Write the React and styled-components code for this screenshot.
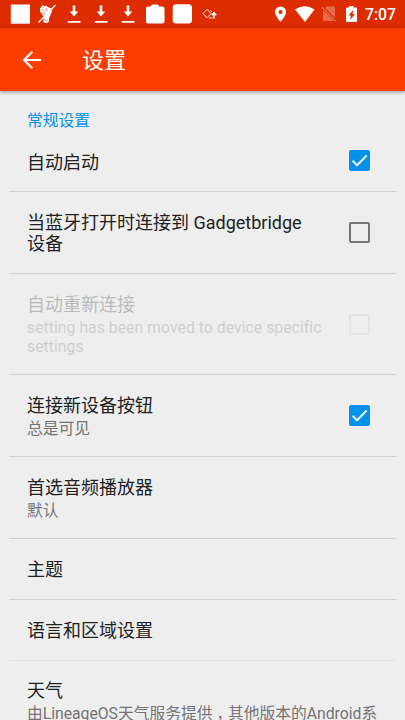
import React from "react";
import styled, { createGlobalStyle } from "styled-components";

const settings = [
  { title: "自动启动", checked: true, height: 62, shift: 4 },
  {
    title: "当蓝牙打开时连接到 Gadgetbridge 设备",
    checked: false,
    height: 82,
    shift: 1,
  },
  {
    title: "自动重新连接",
    summary: "setting has been moved to device specific settings",
    checked: false,
    disabled: true,
    height: 101,
    shift: 2,
  },
  {
    title: "连接新设备按钮",
    summary: "总是可见",
    checked: true,
    height: 82,
    shift: 2.5,
  },
  { title: "首选音频播放器", summary: "默认", height: 82, shift: 2.5 },
  { title: "主题", height: 61 },
  { title: "语言和区域设置", height: 61, faint: true },
  {
    title: "天气",
    summary: "由LineageOS天气服务提供，其他版本的Android系",
    wide: true,
    height: 79,
    shift: 3.5,
  },
];

const DownloadIcon = () => (
  <svg width="14" height="20" viewBox="0 0 14 20" fill="#fff">
    <path d="M5.7 1.5h2.6v6h3L7 12.5 2.7 7.500h3zM0.800 17h12.700v1.700h-12.700z" />
  </svg>
);

const StatusIcons = () => (
  <>
    <Notifications>
      <svg width="20" height="20" viewBox="0 0 20 20">
        <path fill="#fff" d="M0.800 0.500h19.200v19.200H0.800z" />
      </svg>
      <svg width="20" height="20" viewBox="0 0 20 20">
        <path
          fill="#fff"
          d="M4 3l2-2 1.500 1.500 2-1 1 1.500 3 1 1.500 3-1.500 4-1.500 3v3.500l-2 1.500H8l-2-1.500 1-3.500-2-4-2-2.500L3 5z"
        />
        <path stroke="#fff" strokeWidth="1.300" d="M1.500 18.500L18.500 1" />
        <path
          fill="none"
          stroke="#dd2c00"
          strokeWidth="0.500"
          d="M5 5l3 3M9 4l1 3M5 9l3 1M7.500 16h3.500"
        />
      </svg>
      <DownloadIcon />
      <DownloadIcon />
      <DownloadIcon />
      <svg width="20" height="20" viewBox="0 0 20 20">
        <path
          fill="#fff"
          d="M6 2.500V2q0-1.500 1.500-1.500h5Q14 .5 14 2v.5h3q2.500 0 2.500 2v13q0 2-2.500 2H3q-2 0-2-2v-13q0-2 2-2z"
        />
      </svg>
      <svg width="20" height="20" viewBox="0 0 20 20">
        <rect x="0.700" y="0.300" width="19.300" height="19.300" rx="3.500" fill="#fff" />
      </svg>
      <svg width="16" height="20" viewBox="0 0 16 20" fill="none" stroke="#fff">
        <path
          strokeWidth="0.900"
          d="M1.800 9.500L6 5.300l4.200 4.200L6 13.700zM9.500 6.500l1.500 1.500M8 14h3.500"
        />
        <path strokeWidth="1.500" d="M13 14.500V9M10.800 11.200L13 8.800l2.200 2.400" />
      </svg>
    </Notifications>
    <System>
      <svg width="13" height="18" viewBox="0 0 13 18">
        <path
          fill="#fff"
          fillRule="evenodd"
          d="M6.500 1.500a5.500 5.500 0 0 0-5.500 5.500c0 4 5.500 9.800 5.500 9.800S12 11 12 7a5.500 5.500 0 0 0-5.500-5.500zm0 3.500a2 2 0 1 1 0 4 2 2 0 0 1 0-4z"
        />
      </svg>
      <svg width="20" height="18" viewBox="0 0 20 18">
        <path fill="#fff" d="M0 4.500Q10-2 19.500 4.500L10 17z" />
      </svg>
      <svg width="16" height="18" viewBox="0 0 16 18" opacity=".3">
        <path fill="#fff" d="M5.500 1.500H13q1 0 1 1v10.300L4.200 3zM2 5l11 11H3q-1 0-1-1z" />
        <path stroke="#fff" strokeWidth="1.200" d="M.8 2L14.800 16.200" />
      </svg>
      <svg width="12" height="18" viewBox="0 0 12 18">
        <path
          fill="#fff"
          d="M4 2.500V1h4.500v1.500H11q1 0 1 1V16q0 1-1 1H2q-1 0-1-1V3.500q0-1 1-1z"
        />
        <path fill="#dd2c00" d="M8.500 4.500L3.500 10.500h2.500L5 15l5-6H7.500z" />
      </svg>
      <Clock>7:07</Clock>
    </System>
  </>
);

const SummaryText = ({ text }) => {
  const [first, rest] = text.split("，");
  return (
    <Summary $tight={!!rest}>
      {first}
      {rest && <Comma>，</Comma>}
      {rest}
    </Summary>
  );
};

const App = () => {
  return (
    <Screen>
      <GlobalStyle />
      <StatusBar>
        <StatusIcons />
      </StatusBar>
      <Toolbar>
        <svg width="20" height="20" viewBox="0 0 20 20" fill="none">
          <path stroke="#fff" strokeWidth="2.200" d="M19 10H2.500M10.300 1.700L2 10l8.300 8.300" />
        </svg>
        <h1>设置</h1>
      </Toolbar>
      <Content>
        <Category>常规设置</Category>
        {settings.map((item) => (
          <Row key={item.title} $height={item.height} $faint={item.faint}>
            <Texts
              $disabled={item.disabled}
              $wide={item.wide}
              $shift={item.shift}
            >
              <Title>{item.title}</Title>
              {item.summary && <SummaryText text={item.summary} />}
            </Texts>
            {item.checked !== undefined && (
              <Checkbox $checked={item.checked} $disabled={item.disabled}>
                {item.checked && (
                  <svg width="21" height="21" viewBox="0 0 21 21" fill="none">
                    <path stroke="#eee" strokeWidth="2" d="M3.500 10.800l4.600 4.500L17.700 5.500" />
                  </svg>
                )}
              </Checkbox>
            )}
          </Row>
        ))}
      </Content>
    </Screen>
  );
};

const GlobalStyle = createGlobalStyle`
  * {
    box-sizing: border-box;
  }
  body {
    margin: 0;
    overflow: hidden;
    background: #eee;
    font-family: Roboto, "Noto Sans CJK SC", sans-serif;
  }
  svg {
    display: block;
    flex-shrink: 0;
  }
`;
const Screen = styled.div`
  width: 405px;
  height: 720px;
  overflow: hidden;
  display: flex;
  flex-direction: column;
  background: #eee;
`;
const StatusBar = styled.header`
  height: 28px;
  flex-shrink: 0;
  display: flex;
  justify-content: space-between;
  align-items: center;
  padding: 0 9px 0 10px;
  background: #dd2c00;
`;
const Notifications = styled.div`
  display: flex;
  align-items: center;
  gap: 7px;

  svg:nth-child(n + 3):nth-child(-n + 5) {
    margin: 0 3px;
  }
  svg:nth-child(8) {
    margin-left: 2px;
  }
`;
const System = styled.div`
  display: flex;
  align-items: center;
  gap: 8px;

  svg:nth-child(2) {
    margin-right: -2px;
  }
`;
const Clock = styled.span`
  width: 31px;
  font-size: 15.750px;
  font-weight: 500;
  line-height: 28px;
  padding-top: 2px;
  color: #fff;
`;
const Toolbar = styled.div`
  height: 63px;
  flex-shrink: 0;
  display: flex;
  align-items: center;
  gap: 40px;
  padding: 0 22px;
  background: #ff3d00;
  box-shadow: 0 1px 4px rgb(0 0 0 / 0.4);
  color: #fff;

  h1 {
    margin: 0;
    padding-top: 2px;
    font-size: 22px;
    line-height: 26px;
    font-weight: 400;
  }
`;
const Content = styled.main`
  flex: 1;
  min-height: 0;
  padding: 0 9px;
`;
const Category = styled.div`
  height: 39px;
  padding: 20px 18px 0;
  font-size: 15.750px;
  line-height: 19px;
  color: #0091ea;
`;
const Row = styled.div`
  height: ${(props) => props.$height}px;
  display: flex;
  align-items: center;
  justify-content: space-between;
  padding: 0 26px 0 18px;
  border-bottom: 1px solid ${(props) => (props.$faint ? "#e4e4e4" : "#d2d2d2")};
`;
const Texts = styled.div`
  width: ${(props) => (props.$wide ? "360px" : "296px")};
  padding-top: ${(props) => props.$shift || 0}px;
  flex-shrink: 0;
  opacity: ${(props) => (props.$disabled ? 0.25 : 1)};
`;
const Title = styled.div`
  font-size: 18px;
  line-height: 21px;
  color: #212121;
`;
const Summary = styled.div`
  margin-top: 4px;
  font-size: 15.750px;
  line-height: 18.500px;
  letter-spacing: ${(props) => (props.$tight ? "-0.010px" : "0.040px")};
  color: #737373;
`;
/* half-width comma centred in a full-width cell */
const Comma = styled.span`
  padding: 0 3.900px;
  font-feature-settings: "halt";
`;
const Checkbox = styled.div`
  width: 21px;
  height: 21px;
  border-radius: 2px;
  background: ${(props) => (props.$checked ? "#0091ea" : "transparent")};
  border: ${(props) => (props.$checked ? "none" : "2px solid #757575")};
  opacity: ${(props) => (props.$disabled ? 0.08 : 1)};
`;

export default App;
